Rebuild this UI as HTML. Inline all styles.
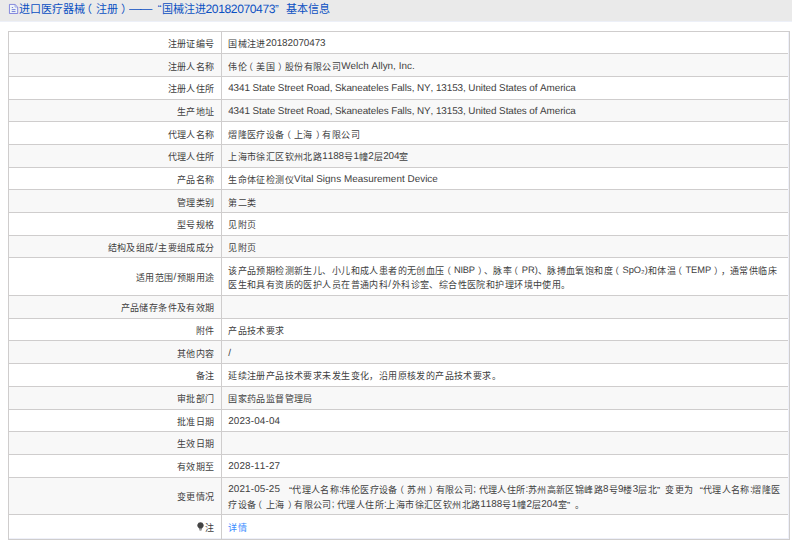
<!DOCTYPE html>
<html lang="zh-CN"><head><meta charset="utf-8"><title>基本信息</title>
<style>
html,body{margin:0;padding:0;background:#fff}
body{width:792px;height:546px;position:relative;overflow:hidden;font-family:"Liberation Sans",sans-serif;font-size:9px;letter-spacing:0.41px;color:#404040;line-height:14.1px;text-spacing-trim:space-all;font-kerning:none}
.hd{position:absolute;left:0;top:0;width:792px;height:21px;background:#eaeaea;border-bottom:1px solid #edf0f8}
.tt{position:absolute;left:18.5px;top:0.4px;height:18.4px;line-height:18.4px;font-size:11px;letter-spacing:0;color:#0b50c2;white-space:nowrap}
.ico{position:absolute;left:8px;top:3px}
.grid div{position:absolute}
.z{left:9px;width:780px;background:#f8f8f8}
.pl,.pr{position:relative}.pl{left:-3px}.pr{left:3px}.tt .pl{left:-3.5px}.tt .pr{left:3.5px}
.fl{background:#eef0f9}
.hl{left:8px;width:782px;height:1px;background:#cfcdcd}
.vl{top:31px;height:509px;width:1px;background:#cfcdcd}
.lab{position:absolute;right:577.3px;white-space:nowrap;line-height:14px}
.val{position:absolute;left:228.2px;white-space:nowrap;line-height:14px}
.l{font-size:9.9px;letter-spacing:0;text-rendering:geometricPrecision;position:relative;top:-1px}
.l.t{font-size:12.1px;top:0}
.l.c{font-size:9.3px}
.qo,.qc,.q{display:inline-block;width:9.41px;letter-spacing:0;overflow:visible;font-size:9.4px}
.qo{text-align:right;width:9.2px}.qc{text-align:left;width:8.4px}
.tt .qo,.tt .qc,.tt .q{width:11px;font-size:11px}
.q{transform:scaleX(1.12);transform-origin:0 50%;position:relative;top:-1.3px}
a{color:#3b8cff}
.bulb{margin-right:0.9px;vertical-align:-0.4px}
</style></head><body>
<div class="hd"></div>
<svg class="ico" width="12" height="13" viewBox="0 0 12 13"><path d="M1.45 1.45H7L9.7 4.1V10.5H1.45Z" fill="#f0f5f8" stroke="#6468d6" stroke-width="0.75" stroke-linejoin="round"/><path d="M7 1.8V4.1H9.4" fill="none" stroke="#7a84de" stroke-width="0.6"/><path d="M3.8 4.5H5.1M3.7 6.6H7.5M3.7 8.55H7.5" stroke="#5866d4" stroke-width="0.8"/></svg>
<div class="tt">进口医疗器械<span class="pl">（</span>注册<span class="pr">）</span><span class="q">—</span><span class="q">—</span><span class="qo">“</span>国械注进<span class="l t" style="letter-spacing:-0.400px">20182070473</span><span class="qc">”</span>基本信息</div>
<div class="grid">
<div class="z" style="top:54px;height:22px"></div>
<div class="z" style="top:100px;height:21px"></div>
<div class="z" style="top:145px;height:22px"></div>
<div class="z" style="top:190px;height:22px"></div>
<div class="z" style="top:236px;height:21px"></div>
<div class="z" style="top:296px;height:22px"></div>
<div class="z" style="top:341px;height:22px"></div>
<div class="z" style="top:387px;height:22px"></div>
<div class="z" style="top:432px;height:22px"></div>
<div class="z" style="top:478px;height:36px"></div>
<div class="hl" style="top:31px"></div>
<div class="hl" style="top:53px"></div>
<div class="hl" style="top:76px"></div>
<div class="hl" style="top:99px"></div>
<div class="hl" style="top:121px"></div>
<div class="hl" style="top:144px"></div>
<div class="hl" style="top:167px"></div>
<div class="hl" style="top:189px"></div>
<div class="hl" style="top:212px"></div>
<div class="hl" style="top:235px"></div>
<div class="hl" style="top:257px"></div>
<div class="hl" style="top:295px"></div>
<div class="hl" style="top:318px"></div>
<div class="hl" style="top:340px"></div>
<div class="hl" style="top:363px"></div>
<div class="hl" style="top:386px"></div>
<div class="hl" style="top:409px"></div>
<div class="hl" style="top:431px"></div>
<div class="hl" style="top:454px"></div>
<div class="hl" style="top:477px"></div>
<div class="hl" style="top:514px"></div>
<div class="hl" style="top:539px"></div>
<div class="fl" style="left:788px;top:32px;width:1px;height:507px"></div><div class="fl" style="left:9px;top:538px;width:780px;height:1px"></div>
<div class="vl" style="left:8px"></div>
<div class="vl" style="left:221px"></div>
<div class="vl" style="left:789px"></div>
</div>
<div class="lab" style="top:37.0px">注册证编号</div><div class="val" style="top:37.0px">国械注进<span class="l" style="letter-spacing:-0.063px">20182070473</span></div>
<div class="lab" style="top:60.0px">注册人名称</div><div class="val" style="top:60.0px">伟伦<span class="pl">（</span>美国<span class="pr">）</span>股份有限公司<span class="l" style="letter-spacing:0.035px">Welch Allyn, Inc.</span></div>
<div class="lab" style="top:82.0px">注册人住所</div><div class="val" style="top:82.0px"><span class="l" style="letter-spacing:-0.076px">4341 State Street Road, Skaneateles Falls, NY, 13153, United States of America</span></div>
<div class="lab" style="top:105.0px">生产地址</div><div class="val" style="top:105.0px"><span class="l" style="letter-spacing:-0.076px">4341 State Street Road, Skaneateles Falls, NY, 13153, United States of America</span></div>
<div class="lab" style="top:128.0px">代理人名称</div><div class="val" style="top:128.0px">熠隆医疗设备<span class="pl">（</span>上海<span class="pr">）</span>有限公司</div>
<div class="lab" style="top:150.0px">代理人住所</div><div class="val" style="top:150.0px">上海市徐汇区钦州北路<span class="l" style="letter-spacing:-0.062px">1188</span>号<span class="l" style="letter-spacing:-0.070px">1</span>幢<span class="l" style="letter-spacing:-0.070px">2</span>层<span class="l" style="letter-spacing:-0.065px">204</span>室</div>
<div class="lab" style="top:173.0px">产品名称</div><div class="val" style="top:173.0px">生命体征检测仪<span class="l" style="letter-spacing:0.037px">Vital Signs Measurement Device</span></div>
<div class="lab" style="top:196.0px">管理类别</div><div class="val" style="top:196.0px">第二类</div>
<div class="lab" style="top:218.0px">型号规格</div><div class="val" style="top:218.0px">见附页</div>
<div class="lab" style="top:241.0px">结构及组成<span class="l" style="letter-spacing:0.850px">/</span>主要组成成分</div><div class="val" style="top:241.0px">见附页</div>
<div class="lab" style="top:271.0px">适用范围<span class="l" style="letter-spacing:0.850px">/</span>预期用途</div><div class="val" style="top:264.0px">该产品预期检测新生儿、小儿和成人患者的无创血压<span class="pl">（</span><span class="l c" style="letter-spacing:-0.276px">NIBP</span><span class="pr">）</span>、脉率<span class="pl">（</span><span class="l c" style="letter-spacing:0.028px">PR)</span>、脉搏血氧饱和度<span class="pl">（</span><span class="l c" style="letter-spacing:-0.023px">SpO₂)</span>和体温<span class="pl">（</span><span class="l c" style="letter-spacing:-0.032px">TEMP</span><span class="pr">）</span>，通常供临床<br>医生和具有资质的医护人员在普通内科<span class="l" style="letter-spacing:0.850px">/</span>外科诊室、综合性医院和护理环境中使用。</div>
<div class="lab" style="top:301.0px">产品储存条件及有效期</div><div class="val" style="top:301.0px"></div>
<div class="lab" style="top:324.0px">附件</div><div class="val" style="top:324.0px">产品技术要求</div>
<div class="lab" style="top:347.0px">其他内容</div><div class="val" style="top:347.0px"><span class="l" style="letter-spacing:0.850px">/</span></div>
<div class="lab" style="top:369.0px">备注</div><div class="val" style="top:369.0px">延续注册产品技术要求未发生变化，沿用原核发的产品技术要求。</div>
<div class="lab" style="top:392.0px">审批部门</div><div class="val" style="top:392.0px">国家药品监督管理局</div>
<div class="lab" style="top:415.0px">批准日期</div><div class="val" style="top:415.0px"><span class="l" style="letter-spacing:0.148px">2023-04-04</span></div>
<div class="lab" style="top:437.0px">生效日期</div><div class="val" style="top:437.0px"></div>
<div class="lab" style="top:460.0px">有效期至</div><div class="val" style="top:460.0px"><span class="l" style="letter-spacing:0.148px">2028-11-27</span></div>
<div class="lab" style="top:490.0px">变更情况</div><div class="val" style="top:483.0px"><span class="l" style="letter-spacing:0.139px">2021-05-25 </span><span class="qo">“</span>代理人名称<span class="l" style="letter-spacing:-0.550px">:</span>伟伦医疗设备<span class="pl">（</span>苏州<span class="pr">）</span>有限公司<span class="l" style="letter-spacing:-0.100px">; </span>代理人住所<span class="l" style="letter-spacing:-0.550px">:</span>苏州高新区锦峰路<span class="l" style="letter-spacing:-0.070px">8</span>号<span class="l" style="letter-spacing:-0.070px">9</span>楼<span class="l" style="letter-spacing:-0.070px">3</span>层北<span class="qc">”</span>变更为<span class="qo">“</span>代理人名称<span class="l" style="letter-spacing:-0.550px">:</span>熠隆医<br>疗设备<span class="pl">（</span>上海<span class="pr">）</span>有限公司<span class="l" style="letter-spacing:-0.100px">; </span>代理人住所<span class="l" style="letter-spacing:-0.550px">:</span>上海市徐汇区钦州北路<span class="l" style="letter-spacing:-0.062px">1188</span>号<span class="l" style="letter-spacing:-0.070px">1</span>幢<span class="l" style="letter-spacing:-0.070px">2</span>层<span class="l" style="letter-spacing:-0.065px">204</span>室<span class="qc">”</span>。</div>
<div class="lab" style="top:521.0px"><svg class="bulb" viewBox="0 0 14 18" width="7" height="9"><path d="M7 0.5a6.3 6.3 0 0 0-3.6 11.5c.6.5.9 1 .9 1.7h5.4c0-.7.3-1.2.9-1.7A6.3 6.3 0 0 0 7 .5z" fill="#444"/><rect x="4.3" y="14.4" width="5.4" height="1.3" fill="#666"/><rect x="5" y="16.3" width="4" height="1.3" fill="#888"/></svg>注</div><div class="val" style="top:521.0px"><a>详情</a></div>
</body></html>
